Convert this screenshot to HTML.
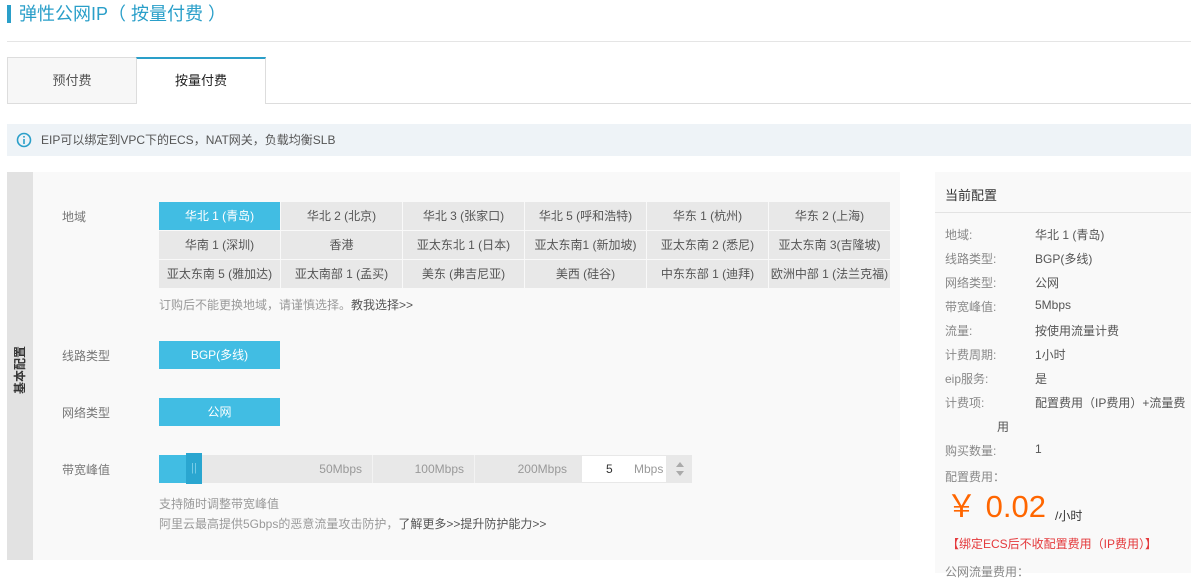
<!DOCTYPE html>
<html><head><meta charset="utf-8"><style>
*{margin:0;padding:0;box-sizing:border-box}
body{width:1191px;height:573px;overflow:hidden;background:#fff;font-family:"Liberation Sans","Noto Sans CJK SC",sans-serif;font-size:12px;color:#666;position:relative}
.a{position:absolute}
.cell{position:absolute;width:121px;height:28px;background:#e8e8e8;line-height:28px;text-align:center;color:#555;font-size:12px;white-space:nowrap}
.sel{background:#41bde3;color:#fff}
.lab{position:absolute;left:62px;color:#777}
.rl{position:absolute;left:945px;color:#888}
.rv{position:absolute;left:1035px;color:#555}
</style></head><body>
<div class="a" style="left:7px;top:5px;width:4px;height:18px;background:#2a9fc9"></div>
<div class="a" style="left:19px;top:2px;font-size:18px;color:#2a9fc9;line-height:24px">弹性公网IP（ 按量付费 ）</div>
<div class="a" style="left:7px;top:41px;width:1184px;height:1px;background:#e5e5e5"></div>
<div class="a" style="left:7px;top:103px;width:1184px;height:1px;background:#ddd"></div>
<div class="a" style="left:7px;top:57px;width:130px;height:47px;background:#f7f7f7;border:1px solid #ddd;text-align:center;line-height:46px;font-size:13px;color:#555">预付费</div>
<div class="a" style="left:136px;top:57px;width:130px;height:47px;background:#fff;border:1px solid #ddd;border-top:2px solid #2a9fc9;border-bottom:none;text-align:center;line-height:44px;font-size:13px;color:#222">按量付费</div>
<div class="a" style="left:7px;top:124px;width:1184px;height:32px;background:#eef3f7"></div>
<svg class="a" style="left:16px;top:132px" width="16" height="16" viewBox="0 0 16 16"><circle cx="8" cy="8" r="6.5" fill="none" stroke="#2a9fc9" stroke-width="1.6"/><rect x="7.2" y="7" width="1.6" height="5" fill="#2a9fc9"/><rect x="7.2" y="4" width="1.6" height="1.6" fill="#2a9fc9"/></svg>
<div class="a" style="left:41px;top:132px;color:#555;line-height:16px">EIP可以绑定到VPC下的ECS，NAT网关，负载均衡SLB</div>
<div class="a" style="left:7px;top:172px;width:893px;height:388px;background:#f9f9f9"></div>
<div class="a" style="left:7px;top:172px;width:26px;height:388px;background:#e2e2e2"></div>
<div class="a" style="left:-10px;top:362px;width:60px;height:16px;text-align:center;font-size:12px;color:#333;font-weight:bold;line-height:16px;transform:rotate(-90deg)">基本配置</div>
<div class="lab" style="top:208px">地域</div>
<div class="cell sel" style="left:159px;top:202px">华北 1 (青岛)</div>
<div class="cell" style="left:281px;top:202px">华北 2 (北京)</div>
<div class="cell" style="left:403px;top:202px">华北 3 (张家口)</div>
<div class="cell" style="left:525px;top:202px">华北 5 (呼和浩特)</div>
<div class="cell" style="left:647px;top:202px">华东 1 (杭州)</div>
<div class="cell" style="left:769px;top:202px">华东 2 (上海)</div>
<div class="cell" style="left:159px;top:231px">华南 1 (深圳)</div>
<div class="cell" style="left:281px;top:231px">香港</div>
<div class="cell" style="left:403px;top:231px">亚太东北 1 (日本)</div>
<div class="cell" style="left:525px;top:231px">亚太东南1 (新加坡)</div>
<div class="cell" style="left:647px;top:231px">亚太东南 2 (悉尼)</div>
<div class="cell" style="left:769px;top:231px">亚太东南 3(吉隆坡)</div>
<div class="cell" style="left:159px;top:260px">亚太东南 5 (雅加达)</div>
<div class="cell" style="left:281px;top:260px">亚太南部 1 (孟买)</div>
<div class="cell" style="left:403px;top:260px">美东 (弗吉尼亚)</div>
<div class="cell" style="left:525px;top:260px">美西 (硅谷)</div>
<div class="cell" style="left:647px;top:260px">中东东部 1 (迪拜)</div>
<div class="cell" style="left:769px;top:260px">欧洲中部 1 (法兰克福)</div>
<div class="a" style="left:159px;top:296px;color:#999">订购后不能更换地域，请谨慎选择。<span style="color:#555">教我选择&gt;&gt;</span></div>
<div class="lab" style="top:347px">线路类型</div>
<div class="cell sel" style="left:159px;top:341px">BGP(多线)</div>
<div class="lab" style="top:404px">网络类型</div>
<div class="cell sel" style="left:159px;top:398px">公网</div>
<div class="lab" style="top:461px">带宽峰值</div>
<div class="a" style="left:159px;top:455px;width:507px;height:28px;background:#e8e8e8"></div>
<div class="a" style="left:159px;top:455px;width:28px;height:28px;background:#41bde3"></div>
<div class="a" style="left:186px;top:453px;width:16px;height:31px;background:#2aa6d0;color:#7ccfe9;text-align:center;line-height:31px;font-size:11px">||</div>
<div class="a" style="left:372px;top:455px;width:1px;height:28px;background:#f3f3f3"></div>
<div class="a" style="left:474px;top:455px;width:1px;height:28px;background:#f3f3f3"></div>
<div class="a" style="left:300px;top:455px;width:62px;line-height:28px;text-align:right;color:#999">50Mbps</div>
<div class="a" style="left:380px;top:455px;width:84px;line-height:28px;text-align:right;color:#999">100Mbps</div>
<div class="a" style="left:480px;top:455px;width:87px;line-height:28px;text-align:right;color:#999">200Mbps</div>
<div class="a" style="left:582px;top:456px;width:84px;height:26px;background:#fff;line-height:26px"><span style="position:absolute;left:24px;color:#333">5</span><span style="position:absolute;left:52px;color:#999">Mbps</span></div>
<div class="a" style="left:666px;top:455px;width:26px;height:28px;background:#e8e8e8"></div>
<svg class="a" style="left:675px;top:460px" width="10" height="18"><path d="M1 7 L5 2 L9 7Z M1 11 L5 16 L9 11Z" fill="#aaa"/></svg>
<div class="a" style="left:159px;top:495px;color:#999">支持随时调整带宽峰值</div>
<div class="a" style="left:159px;top:515px;color:#999">阿里云最高提供5Gbps的恶意流量攻击防护，<span style="color:#555">了解更多&gt;&gt;提升防护能力&gt;&gt;</span></div>
<div class="a" style="left:935px;top:172px;width:256px;height:401px;background:#f9f9f9"></div>
<div class="a" style="left:945px;top:185px;font-size:13px;color:#333">当前配置</div>
<div class="a" style="left:935px;top:212px;width:256px;height:1px;background:#e3e3e3"></div>
<div class="rl" style="top:226px">地域:</div><div class="rv" style="top:226px">华北 1 (青岛)</div>
<div class="rl" style="top:250px">线路类型:</div><div class="rv" style="top:250px">BGP(多线)</div>
<div class="rl" style="top:274px">网络类型:</div><div class="rv" style="top:274px">公网</div>
<div class="rl" style="top:298px">带宽峰值:</div><div class="rv" style="top:298px">5Mbps</div>
<div class="rl" style="top:322px">流量:</div><div class="rv" style="top:322px">按使用流量计费</div>
<div class="rl" style="top:346px">计费周期:</div><div class="rv" style="top:346px">1小时</div>
<div class="rl" style="top:370px">eip服务:</div><div class="rv" style="top:370px">是</div>
<div class="rl" style="top:394px">计费项:</div><div class="rv" style="top:394px">配置费用（IP费用）+流量费</div>
<div class="rv" style="left:997px;top:418px">用</div>
<div class="rl" style="top:442px">购买数量:</div><div class="rv" style="top:442px">1</div>
<div class="rl" style="top:468px">配置费用：</div>
<div class="a" style="left:946px;top:489px;font-size:31px;color:#f60;line-height:36px">￥ 0.02</div>
<div class="a" style="left:1055px;top:507px;color:#333">/小时</div>
<div class="a" style="left:947px;top:535px;color:#e4393c">【绑定ECS后不收配置费用（IP费用）】</div>
<div class="rl" style="top:563px">公网流量费用：</div>
</body></html>
